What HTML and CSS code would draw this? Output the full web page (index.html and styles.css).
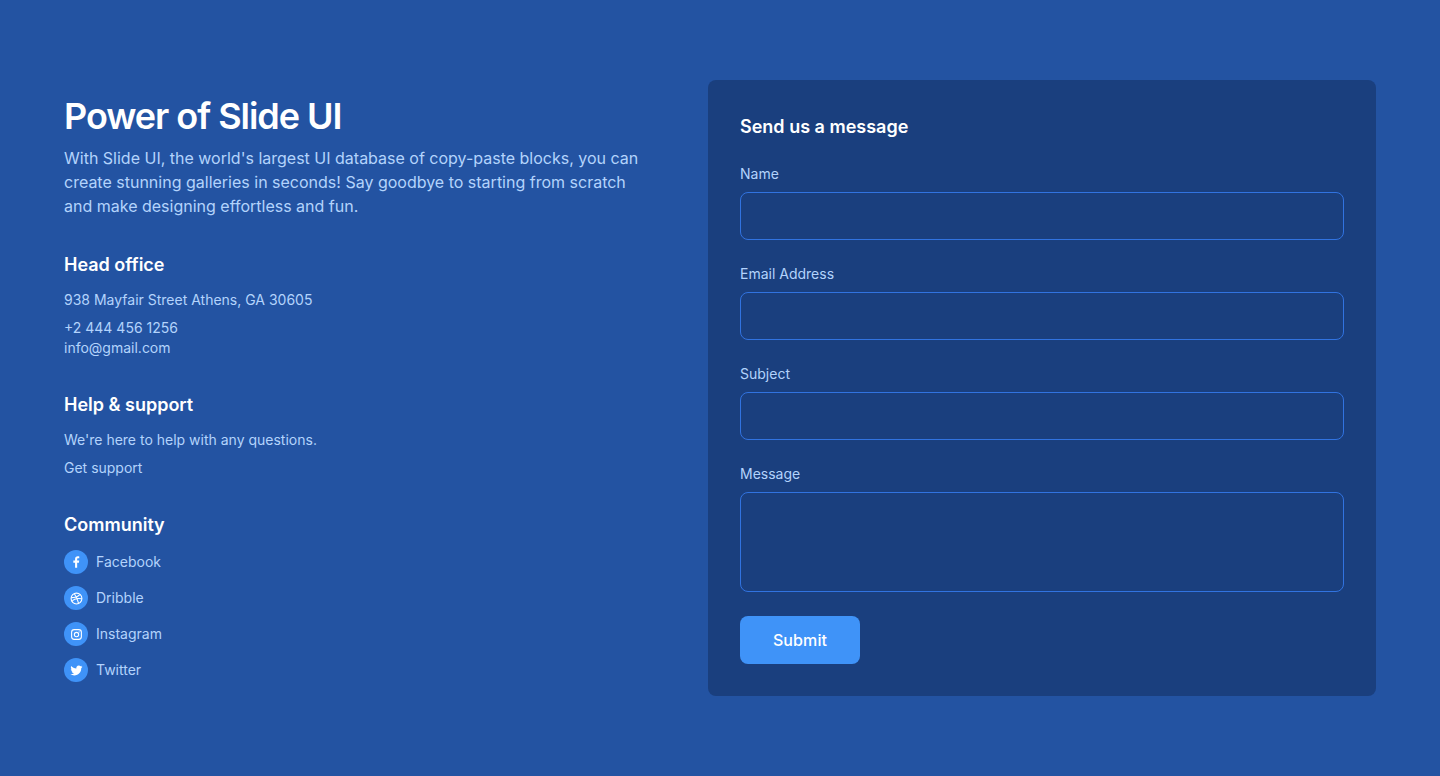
FILE: index.html
```html
<!DOCTYPE html>
<html lang="en">
<head>
<meta charset="utf-8">
<title>Power of Slide UI</title>
<link rel="stylesheet" href="styles.css">
</head>
<body>
<main class="page">
  <section class="info">
    <h1 class="title">Power of Slide UI</h1>
    <p class="lead">With Slide UI, the world's largest UI database of copy-paste blocks, you can create stunning galleries in seconds! Say goodbye to starting from scratch and make designing effortless and fun.</p>
    <div class="block">
      <h2 class="block-title">Head office</h2>
      <p class="line line-first">938 Mayfair Street Athens, GA 30605</p>
      <p class="line line-gap">+2 444 456 1256</p>
      <p class="line">info@gmail.com</p>
    </div>
    <div class="block">
      <h2 class="block-title">Help &amp; support</h2>
      <p class="line line-first">We're here to help with any questions.</p>
      <p class="line line-gap">Get support</p>
    </div>
    <div class="block">
      <h2 class="block-title">Community</h2>
      <ul class="social">
        <li class="social-item">
          <span class="social-icon"><svg viewBox="0 0 12 12" width="14" height="14"><path fill="#fff" d="M7 11V6.600h1.500l.25-1.800H7V3.700c0-.5.15-.85.85-.85h.95V1.200C8.600 1.170 8.100 1.100 7.500 1.100 6.150 1.100 5.200 1.950 5.200 3.500v1.300H3.700v1.800h1.500V11z"/></svg></span>
          <span>Facebook</span>
        </li>
        <li class="social-item">
          <span class="social-icon"><svg viewBox="0 0 12 12" width="13" height="13" fill="none" stroke="#fff" stroke-width="1"><circle cx="6" cy="6" r="5"/><path d="M4 1.600c1.600 2 3 5 3.900 9M1.100 5.200c3.300 0 5.700-.6 8-2.800M1.800 8.800C3.500 6.500 6.500 5.400 10.900 6.300"/></svg></span>
          <span>Dribble</span>
        </li>
        <li class="social-item">
          <span class="social-icon"><svg viewBox="0 0 12 12" width="13" height="13" fill="none" stroke="#fff" stroke-width="1"><rect x="1.500" y="1.500" width="9" height="9" rx="2.400"/><circle cx="6" cy="6" r="2"/><circle cx="8.400" cy="3.600" r=".5" fill="#fff" stroke="none"/></svg></span>
          <span>Instagram</span>
        </li>
        <li class="social-item">
          <span class="social-icon"><svg viewBox="0 0 24 24" width="13" height="13"><path fill="#fff" d="M23 4.900c-.8.400-1.700.6-2.600.8.900-.6 1.700-1.400 2-2.500-.9.500-1.900.9-2.900 1.100A4.600 4.600 0 0 0 11.700 8.500C7.900 8.300 4.500 6.500 2.200 3.700c-1.200 2.100-.6 4.800 1.400 6.100-.7 0-1.400-.2-2.100-.6 0 2.200 1.600 4.100 3.700 4.600-.7.200-1.400.2-2.100.1.600 1.900 2.300 3.200 4.300 3.200A9.300 9.300 0 0 1 .6 19c2.100 1.300 4.500 2.100 7.100 2.100 8.600 0 13.400-7.300 13.100-13.800.9-.7 1.700-1.500 2.200-2.400z"/></svg></span>
          <span>Twitter</span>
        </li>
      </ul>
    </div>
  </section>
  <form class="card">
    <h2 class="card-title">Send us a message</h2>
    <label class="field"><span class="field-label">Name</span><input class="control" type="text"></label>
    <label class="field"><span class="field-label">Email Address</span><input class="control" type="text"></label>
    <label class="field"><span class="field-label">Subject</span><input class="control" type="text"></label>
    <label class="field"><span class="field-label">Message</span><textarea class="control control-area"></textarea></label>
    <button class="submit" type="button">Submit</button>
  </form>
</main>
</body>
</html>
```
FILE: styles.css
```css
* { box-sizing: border-box; }
html, body { margin: 0; height: 100%; }
body {
  background: #2353a2;
  font-family: Inter, "Liberation Sans", sans-serif;
  color: #b3d3fc;
}
.page {
  display: flex;
  justify-content: space-between;
  align-items: flex-start;
  padding: 80px 64px;
}
.info {
  width: 584px;
  padding-top: 16px;
}
.title {
  margin: 0;
  font-size: 36px;
  line-height: 40px;
  font-weight: 600;
  color: #fff;
  letter-spacing: -1.05px;
}
.lead {
  margin: 10px 0 0;
  font-size: 16px;
  line-height: 24px;
}
.block { margin-top: 33px; }
.block-title {
  margin: 0;
  font-size: 18px;
  line-height: 28px;
  font-weight: 600;
  color: #fff;
}
.line {
  margin: 0;
  font-size: 14px;
  line-height: 20px;
}
.line-first { margin-top: 11px; }
.line-gap { margin-top: 8px; }
.social {
  list-style: none;
  margin: 11px 0 0;
  padding: 0;
  display: flex;
  flex-direction: column;
  gap: 12px;
}
.social-item {
  display: flex;
  align-items: center;
  gap: 8px;
  font-size: 14px;
  line-height: 24px;
}
.social-icon {
  width: 24px;
  height: 24px;
  border-radius: 50%;
  background: #3f93f8;
  display: flex;
  align-items: center;
  justify-content: center;
}
.card {
  width: 668px;
  height: 616px;
  padding: 32px;
  background: #1a3f7e;
  border-radius: 8px;
  display: flex;
  flex-direction: column;
  align-items: flex-start;
}
.card-title {
  margin: 0 0 22px;
  font-size: 18px;
  line-height: 30px;
  font-weight: 600;
  color: #fff;
}
.field {
  display: block;
  width: 100%;
  margin-bottom: 24px;
}
.field-label {
  display: block;
  font-size: 14px;
  line-height: 20px;
  margin-bottom: 8px;
}
.control {
  display: block;
  width: 100%;
  height: 48px;
  background: transparent;
  border: 1px solid #3173e0;
  border-radius: 8px;
  padding: 0 16px;
  outline: none;
  resize: none;
}
.control-area { height: 100px; }
.submit {
  width: 120px;
  height: 48px;
  border: 0;
  border-radius: 8px;
  background: #3f93f8;
  color: #fff;
  font: 450 16px/24px Inter, "Liberation Sans", sans-serif;
  letter-spacing: 0.1px;
}
```
